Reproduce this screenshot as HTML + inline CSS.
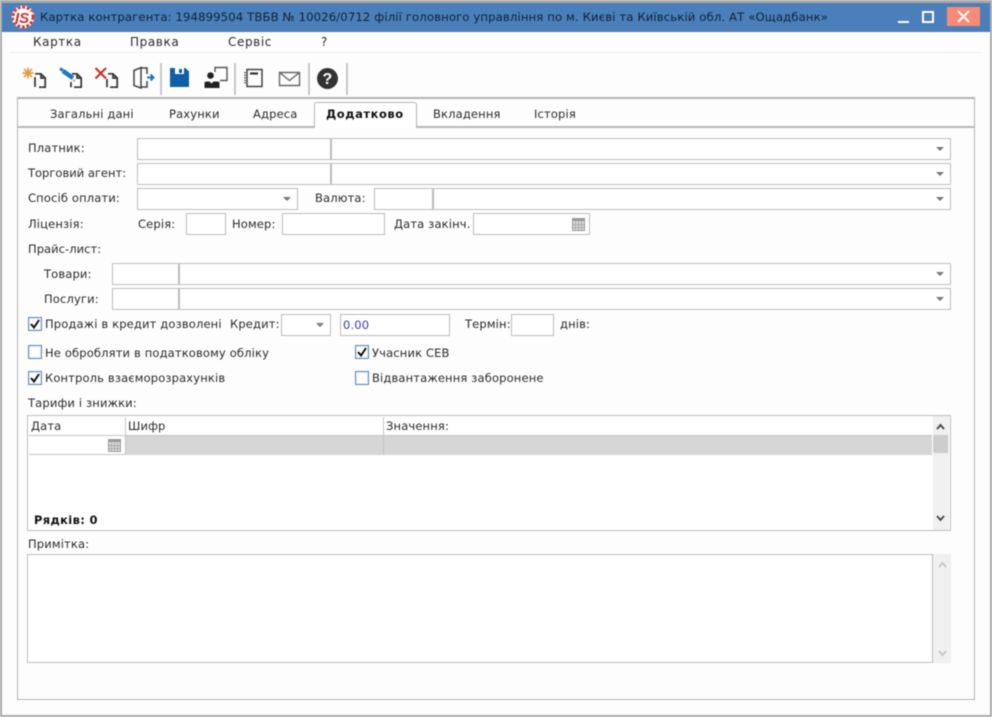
<!DOCTYPE html>
<html><head><meta charset="utf-8"><style>
html,body{margin:0;padding:0;background:#fff}
#r{position:relative;width:992px;height:717px;overflow:hidden;background:#fdfdfd;font-family:"DejaVu Sans",sans-serif;font-size:11.5px;letter-spacing:.15px;color:#2a2a2a;filter:blur(.45px)}
#r div,#r span.t,#r svg{position:absolute}
.t{position:absolute;white-space:nowrap;line-height:14px}
.f{box-sizing:border-box;border:1px solid #bdbdbd;background:#fff;height:22px}
.a{width:0;height:0;border-left:4px solid transparent;border-right:4px solid transparent;border-top:4px solid #777}
.c{box-sizing:border-box;width:14px;height:14px;border:1px solid #5f86b3;background:#fff;box-shadow:inset 0 0 0 1px #e4ebf3}
.m{color:#2a2a2a;font-size:12px;letter-spacing:.6px}
.sep{width:2px;height:32px;background:#c8c8c8;top:63px}
</style></head><body><div id="r">
<div style="left:0;top:0;width:992px;height:717px;box-sizing:border-box;border:2px solid #a9a9a9;border-top:3px solid #a9a9a9"></div>
<div style="left:2px;top:3px;width:988px;height:29px;background:#4a7fb9"></div>
<svg style="left:10px;top:3px" width="26" height="28" viewBox="0 0 26 28"><circle cx="13" cy="14" r="11.500" fill="#fff"/><circle cx="13" cy="14" r="10" fill="none" stroke="#c9403c" stroke-width="3" stroke-dasharray="3 1.600"/><path d="M6 8.500h16l-3 11H3z" fill="#fff"/><text x="5" y="20" font-family="Liberation Sans" font-style="italic" font-weight="bold" font-size="15" fill="#c8302e" letter-spacing="0">IS</text></svg>
<span class="t" style="left:40px;top:10px;color:#10233a;font-size:11.7px;letter-spacing:.1px">Картка контрагента: 194899504 ТВБВ № 10026/0712 філії головного управління по м. Києві та Київській обл. АТ «Ощадбанк»</span>
<div style="left:898px;top:21px;width:11px;height:2px;background:#fff"></div>
<div style="left:922px;top:11px;width:12px;height:12px;box-sizing:border-box;border:2px solid #fff"></div>
<div style="left:947px;top:7px;width:33px;height:19px;background:#f88a76"></div>
<svg style="left:957px;top:10px" width="13" height="13" viewBox="0 0 13 13"><path d="M1 1l11 11M12 1L1 12" stroke="#fff" stroke-width="2"/></svg>

<span class="t m" style="left:33px;top:35px">Картка</span>
<span class="t m" style="left:130px;top:35px">Правка</span>
<span class="t m" style="left:228px;top:35px">Сервіс</span>
<span class="t m" style="left:321px;top:35px">?</span>
<div style="left:10px;top:52px;width:973px;height:1px;background:#f0f0f0"></div>

<svg style="left:0;top:60px" width="360" height="36" viewBox="0 60 360 36" fill="none">
<g stroke="#333" stroke-width="1.700">
<path d="M35 87V77M35 73.800h6l4.200 4.200v9.200H39M41 73.800V78h4.200"/>
<path d="M71 87.200V82M72 73.800h5l4.200 4.200v9.200H74M77 73.800V78h4.200"/>
<path d="M107 87.200V79M108 73.800h5l4.200 4.200v9.200H110M113 73.800V78h4.200"/>
</g>
<g stroke="#e0a040" stroke-width="1.700"><path d="M28 67.500v11M22.500 73h11M24 69l8 8M32 69l-8 8"/></g>
<path d="M60 68.500l3 2" stroke="#1f78c1" stroke-width="3"/><path d="M63 71l10 7" stroke="#1f78c1" stroke-width="4.500"/><path d="M73 80l2 1" stroke="#8ab" stroke-width="2"/>
<path d="M95.500 68l10.500 10.500M106 68L95.500 78.500" stroke="#c0392b" stroke-width="2.200"/>
<path d="M134 70.500l7-3v20.500l-7-2.500zM141 68h6v6M147 81v6h-6" stroke="#444" stroke-width="1.500"/>
<path d="M147 77.500h6M150.500 74.500l3 3-3 3" stroke="#1f78c1" stroke-width="2"/>
<path d="M170 68h15.500l3.500 3.500V87h-19z" fill="#0f5ea8"/><rect x="175" y="68" width="9" height="6" fill="#fff"/><rect x="179" y="69" width="3" height="4" fill="#0f5ea8"/>
<path d="M215 72v-4.500h12v13h-7" stroke="#555" stroke-width="1.400"/><circle cx="210.500" cy="75.500" r="3.300" fill="#222"/><path d="M204.500 88v-5q0-1.500 2-1.500h3l2 2 2-2h4q2 0 2 1.500v5z" fill="#222"/>
<path d="M247 69.500h15v17h-15z" stroke="#444" stroke-width="1.500"/><path d="M245 72v12" stroke="#555" stroke-width="1.500" stroke-dasharray="1.500 1"/><path d="M250 73.500h8" stroke="#333" stroke-width="2.200"/>
<path d="M279.500 72.500h20v13h-20zM279.500 72.500l10 8 10-8" stroke="#666" stroke-width="1.400"/>
<circle cx="327.500" cy="78.500" r="10.500" fill="#333"/>
<text x="327.500" y="84" text-anchor="middle" font-family="Liberation Sans" font-weight="bold" font-size="16" fill="#fff">?</text>
</svg>
<div class="sep" style="left:160px"></div>
<div class="sep" style="left:234px"></div>
<div class="sep" style="left:308px"></div>
<div class="sep" style="left:346px"></div>

<div style="left:17px;top:97px;width:958px;height:603px;box-sizing:border-box;border:1px solid #b4b4b4;border-top:2px solid #b4b4b4;background:#fdfdfd"></div>
<div style="left:18px;top:126px;width:956px;height:2px;background:#b8b8b8"></div>
<div style="left:314px;top:102px;width:103px;height:26px;box-sizing:border-box;border:1px solid #b4b4b4;border-bottom:none;background:#fff;border-radius:3px 3px 0 0"></div>
<span class="t" style="left:50px;top:107px">Загальні дані</span>
<span class="t" style="left:169px;top:107px">Рахунки</span>
<span class="t" style="left:253px;top:107px">Адреса</span>
<span class="t" style="left:326px;top:107px;font-weight:bold;color:#111;letter-spacing:.55px">Додатково</span>
<span class="t" style="left:433px;top:107px">Вкладення</span>
<span class="t" style="left:534px;top:107px">Історія</span>

<span class="t" style="left:28px;top:141px">Платник:</span>
<div class="f" style="left:137px;top:138px;width:194px"></div><div class="f" style="left:331px;top:138px;width:620px"></div><div class="a" style="left:936px;top:147px"></div>
<span class="t" style="left:28px;top:166px;letter-spacing:0">Торговий агент:</span>
<div class="f" style="left:137px;top:163px;width:194px"></div><div class="f" style="left:331px;top:163px;width:620px"></div><div class="a" style="left:936px;top:172px"></div>
<span class="t" style="left:28px;top:191px">Спосіб оплати:</span>
<div class="f" style="left:137px;top:188px;width:161px"></div><div class="a" style="left:283px;top:197px"></div>
<span class="t" style="left:315px;top:191px">Валюта:</span>
<div class="f" style="left:374px;top:188px;width:59px"></div><div class="f" style="left:433px;top:188px;width:518px"></div><div class="a" style="left:936px;top:197px"></div>
<span class="t" style="left:28px;top:217px">Ліцензія:</span>
<span class="t" style="left:138px;top:217px">Серія:</span>
<div class="f" style="left:186px;top:213px;width:40px"></div>
<span class="t" style="left:232px;top:217px">Номер:</span>
<div class="f" style="left:282px;top:213px;width:103px"></div>
<span class="t" style="left:394px;top:217px">Дата закінч.</span>
<div class="f" style="left:473px;top:213px;width:117px"></div>
<svg style="left:572px;top:218px" width="13" height="13"><rect width="13" height="13" fill="#999"/><rect x="1" y="3" width="11" height="9" fill="#ddd"/><path d="M3.500 3v9M6.500 3v9M9.500 3v9M1 6.500h11M1 9.500h11" stroke="#aaa"/></svg>
<span class="t" style="left:28px;top:242px;letter-spacing:.05px">Прайс-лист:</span>
<span class="t" style="left:44px;top:267px">Товари:</span>
<div class="f" style="left:112px;top:263px;width:67px"></div><div class="f" style="left:179px;top:263px;width:772px"></div><div class="a" style="left:936px;top:272px"></div>
<span class="t" style="left:44px;top:292px">Послуги:</span>
<div class="f" style="left:112px;top:288px;width:67px"></div><div class="f" style="left:179px;top:288px;width:772px"></div><div class="a" style="left:936px;top:297px"></div>

<div class="c" style="left:28px;top:317px"></div>
<svg style="left:28px;top:317px" width="14" height="14"><path d="M3 7l3 3.500L11 3" fill="none" stroke="#111" stroke-width="2"/></svg>
<span class="t" style="left:45px;top:317px">Продажі в кредит дозволені</span>
<span class="t" style="left:230px;top:317px">Кредит:</span>
<div class="f" style="left:281px;top:314px;width:50px"></div><div class="a" style="left:316px;top:323px"></div>
<div class="f" style="left:340px;top:314px;width:110px"></div>
<span class="t" style="left:343px;top:318px;color:#3a3aa8">0.00</span>
<span class="t" style="left:465px;top:317px">Термін:</span>
<div class="f" style="left:511px;top:314px;width:43px"></div>
<span class="t" style="left:560px;top:317px">днів:</span>

<div class="c" style="left:28px;top:345px"></div>
<span class="t" style="left:45px;top:346px">Не обробляти в податковому обліку</span>
<div class="c" style="left:355px;top:345px"></div>
<svg style="left:355px;top:345px" width="14" height="14"><path d="M3 7l3 3.500L11 3" fill="none" stroke="#111" stroke-width="2"/></svg>
<span class="t" style="left:372px;top:346px">Учасник СЕВ</span>
<div class="c" style="left:28px;top:371px"></div>
<svg style="left:28px;top:371px" width="14" height="14"><path d="M3 7l3 3.500L11 3" fill="none" stroke="#111" stroke-width="2"/></svg>
<span class="t" style="left:45px;top:371px">Контроль взаєморозрахунків</span>
<div class="c" style="left:355px;top:371px"></div>
<span class="t" style="left:372px;top:371px">Відвантаження заборонене</span>
<span class="t" style="left:28px;top:396px">Тарифи і знижки:</span>

<div class="f" style="left:27px;top:415px;width:924px;height:116px;border-color:#bcbcc4"></div>
<div style="left:126px;top:436px;width:806px;height:19px;background:#d6d6d6"></div>
<div style="left:29px;top:435px;width:903px;height:1px;background:#c4c4c4"></div>
<div style="left:125px;top:417px;width:1px;height:38px;background:#c4c4c4"></div>
<div style="left:383px;top:417px;width:1px;height:38px;background:#c4c4c4"></div>
<div style="left:29px;top:454px;width:97px;height:1px;background:#c4c4c4"></div>
<div style="left:933px;top:416px;width:16px;height:114px;background:#f0f0f0"></div>
<div style="left:933px;top:435px;width:15px;height:18px;background:#cdcdcd"></div>
<svg style="left:935px;top:422px" width="11" height="102" fill="none" stroke="#444" stroke-width="1.800"><path d="M2 7l3.500-4L9 7M2 94l3.500 4L9 94"/></svg>
<span class="t" style="left:31px;top:419px">Дата</span>
<span class="t" style="left:128px;top:419px">Шифр</span>
<span class="t" style="left:386px;top:419px">Значення:</span>
<svg style="left:108px;top:439px" width="13" height="13"><rect width="13" height="13" fill="#999"/><rect x="1" y="3" width="11" height="9" fill="#ddd"/><path d="M3.500 3v9M6.500 3v9M9.500 3v9M1 6.500h11M1 9.500h11" stroke="#aaa"/></svg>
<span class="t" style="left:34px;top:513px;font-weight:bold;color:#111;letter-spacing:.35px">Рядків: 0</span>

<span class="t" style="left:28px;top:537px">Примітка:</span>
<div class="f" style="left:27px;top:554px;width:906px;height:109px"></div>
<div style="left:933px;top:554px;width:18px;height:109px;background:#f0f0f0"></div>
<svg style="left:937px;top:560px" width="11" height="98" fill="none" stroke="#c4c4c4" stroke-width="1.800"><path d="M2 7l3.500-4L9 7M2 91l3.500 4L9 91"/></svg>
</div></body></html>
